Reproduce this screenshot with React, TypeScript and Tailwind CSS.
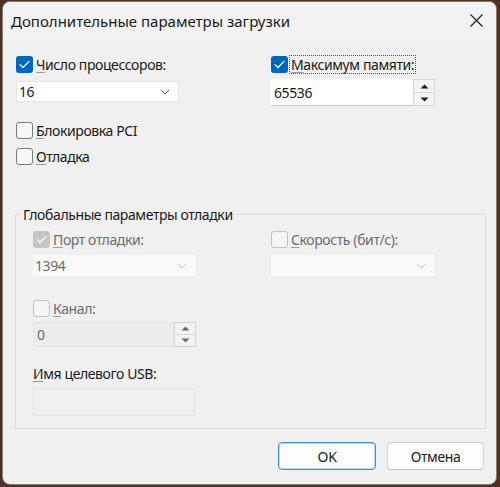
import React from "react";

const font = { fontFamily: '"Noto Sans", "Segoe UI", Arial, sans-serif' };
const txt = "text-[14px] tracking-[-0.4px]";

function Check({ color = "white" }: { color?: string }) {
  return (
    <svg width="11" height="9" viewBox="0 0 11 9" fill="none">
      <path d="M1 4.6 L4 7.5 L10 1.3" stroke={color} strokeWidth="1.2" strokeLinecap="round" strokeLinejoin="round" />
    </svg>
  );
}

interface BoxProps {
  checked?: boolean;
  disabled?: boolean;
  label: string;
  focused?: boolean;
}

function CheckBox({ checked, disabled, label, focused }: BoxProps) {
  let box = "border border-[#7a7a7a] bg-[#f7f7f7]";
  if (checked && !disabled) box = "bg-[#0067c0]";
  if (checked && disabled) box = "bg-[#c5c5c5]";
  if (!checked && disabled) box = "border border-[#c2c2c2] bg-[#f5f5f5]";
  const first = label.slice(0, 1);
  const rest = label.slice(1);
  return (
    <div className="flex items-center h-[18px]">
      <div className={`w-[17px] h-[17px] rounded-[3px] flex items-center justify-center shrink-0 ${box}`}>
        {checked && <Check />}
      </div>
      <span
        className={`ml-[2px] px-[1px] leading-[17px] ${txt} whitespace-nowrap ${
          disabled ? "text-[#6d6d6d]" : "text-[#1a1a1a]"
        } ${focused ? "outline outline-1 outline-dotted outline-[#555]" : ""}`}
      >
        <span className="underline decoration-[#9a9a9a] underline-offset-2">{first}</span>
        {rest}
      </span>
    </div>
  );
}

function Chevron({ color }: { color: string }) {
  return (
    <svg width="10" height="6" viewBox="0 0 10 6" fill="none">
      <path d="M0.8 0.8 L5 5 L9.2 0.8" stroke={color} strokeWidth="1" />
    </svg>
  );
}

function Combo({ value, disabled, w }: { value: string; disabled?: boolean; w: string }) {
  return (
    <div
      className={`${w} h-[21px] flex items-center justify-between pl-[2px] pr-[8px] ${txt} ${
        disabled ? "bg-[#f9f9f9] text-[#6d6d6d]" : "bg-white text-[#1a1a1a] border border-[#e6e6e6]"
      }`}
    >
      <span>{value}</span>
      <Chevron color={disabled ? "#c8c8c8" : "#6a6a6a"} />
    </div>
  );
}

function Tri({ up, color }: { up?: boolean; color: string }) {
  return (
    <svg width="9" height="5" viewBox="0 0 9 5">
      <path d={up ? "M0.5 4.5 L4.5 0.5 L8.5 4.5 Z" : "M0.5 0.5 L4.5 4.5 L8.5 0.5 Z"} fill={color} />
    </svg>
  );
}

function Spin({ value, disabled, w, h }: { value: string; disabled?: boolean; w: string; h: string }) {
  const tri = disabled ? "#6a6a6a" : "#1a1a1a";
  return (
    <div className={`flex ${h}`}>
      <div
        className={`${w} flex items-center pl-[3px] ${txt} border-b ${
          disabled ? "bg-[#ececec] border-[#e4e4e4] text-[#6d6d6d] border" : "bg-white border-[#c8c8c8] text-[#1a1a1a]"
        }`}
      >
        {value}
      </div>
      <div className="w-[22px] flex flex-col border border-[#d6d6d6] bg-[#f0f0f0]">
        <div className="flex-1 flex items-center justify-center border-b border-[#d9d9d9] bg-[#f3f3f3]">
          <Tri up color={tri} />
        </div>
        <div className="flex-1 flex items-center justify-center bg-[#f3f3f3]">
          <Tri color={tri} />
        </div>
      </div>
    </div>
  );
}

export default function App() {
  return (
    <div className="w-[500px] h-[487px] bg-[#4e3124] pl-[2px] pt-[1px]" style={font}>
      <div className="w-[495px] h-[484px] rounded-[8px] bg-[#f0f0f0] overflow-hidden flex flex-col border border-[#8d7b70]">
        <div className="h-[37px] bg-[#f2f2f2] flex items-center justify-between pl-[8px] pr-[13px] shrink-0">
          <span className="text-[15px] text-[#1a1a1a] pt-[2px]">Дополнительные параметры загрузки</span>
          <svg width="13" height="13" viewBox="0 0 13 13" fill="none">
            <path d="M0.5 0.5 L12.5 12.5 M12.5 0.5 L0.5 12.5" stroke="#1a1a1a" strokeWidth="1.1" />
          </svg>
        </div>

        <div className="flex pl-[13px] pt-[16px]">
          <div className="w-[255px] flex flex-col">
            <CheckBox checked label="Число процессоров:" />
            <div className="mt-[8px]">
              <Combo value="16" w="w-[163px]" />
            </div>
            <div className="mt-[19px]">
              <CheckBox label="Блокировка PCI" />
            </div>
            <div className="mt-[8px]">
              <CheckBox label="Отладка" />
            </div>
          </div>
          <div className="flex flex-col">
            <CheckBox checked focused label="Максимум памяти:" />
            <div className="mt-[6px]">
              <Spin value="65536" w="w-[142px]" h="h-[27px]" />
            </div>
          </div>
        </div>

        <fieldset className="ml-[12px] mr-[10px] mt-[41px] h-[223px] border border-[#dcdcdc]">
          <legend className="ml-[5px] px-[2px] text-[#1a1a1a] leading-[17px] text-[14px] tracking-[-0.4px]">
            Глобальные параметры отладки
          </legend>
          <div className="flex mt-[7px] pl-[17px]">
            <div className="w-[238px] flex flex-col">
              <CheckBox checked disabled label="Порт отладки:" />
              <div className="mt-[7px]">
                <Combo value="1394" disabled w="w-[162px]" />
              </div>
              <div className="mt-[23px]">
                <CheckBox disabled label="Канал:" />
              </div>
              <div className="mt-[5px]">
                <Spin value="0" disabled w="w-[141px]" h="h-[25px]" />
              </div>
              <div className={`mt-[18px] ${txt} text-[#1a1a1a] leading-[17px]`}>
                <span className="underline decoration-[#9a9a9a] underline-offset-2">И</span>мя целевого USB:
              </div>
              <div className="mt-[6px] w-[162px] h-[28px] border border-[#e3e3e3] bg-[#f0f0f0]" />
            </div>
            <div className="flex flex-col">
              <CheckBox disabled label="Скорость (бит/с):" />
              <div className="mt-[7px]">
                <Combo value="" disabled w="w-[163px]" />
              </div>
            </div>
          </div>
        </fieldset>

        <div className="flex justify-end gap-[11px] pr-[12px] mt-[13px]">
          <button className={`w-[98px] h-[28px] rounded-[4px] border border-[#3f8fd9] bg-[#fdfdfd] ${txt} text-[#1a1a1a] shadow-[inset_0_0_0_1px_#b9d7f2]`}>
            OK
          </button>
          <button className={`w-[97px] h-[28px] rounded-[4px] border border-[#d3d3d3] border-b-[#c0c0c0] bg-[#fdfdfd] ${txt} text-[#1a1a1a]`}>
            Отмена
          </button>
        </div>
      </div>
    </div>
  );
}
